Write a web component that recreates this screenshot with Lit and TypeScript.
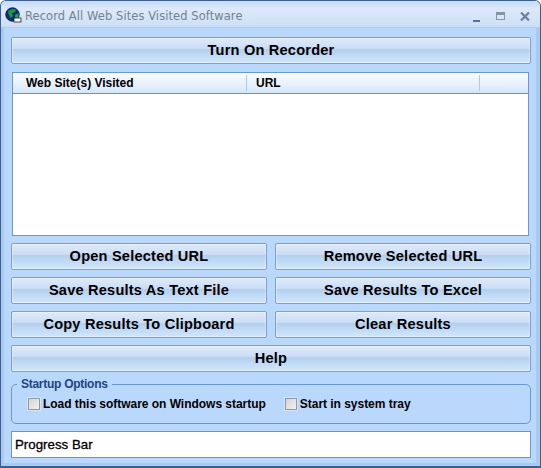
import { LitElement, html, css } from "lit";
import { customElement } from "lit/decorators.js";

@customElement("app-root")
export class AppRoot extends LitElement {
  static styles = css`
    :host {
      display: block;
      width: 541px;
      height: 468px;
      overflow: hidden;
      font-family: "Liberation Sans", Arial, sans-serif;
      color: #000;
    }
    .window {
      box-sizing: border-box;
      width: 541px;
      height: 468px;
      display: flex;
      flex-direction: column;
      background: #bad7fc;
      border: 1px solid #3d5f8d;
      border-bottom-width: 2px;
      border-radius: 6px 6px 0 0;
      overflow: hidden;
    }
    .titlebar {
      flex: 0 0 27px;
      box-sizing: border-box;
      display: flex;
      align-items: center;
      background: linear-gradient(#c4daf6, #dce9fa 30%, #d3e3f8 75%, #cbdef6);
      border-bottom: 1px solid #a9cdf6;
      padding: 4px 0 0 4px;
    }
    .logo {
      align-self: flex-start;
      margin-top: 2px;
    }
    .title {
      margin-left: 3px;
      font-family: "DejaVu Sans", sans-serif;
      font-size: 11.45px;
      letter-spacing: 0.1px;
      color: #75828f;
      flex: 1;
    }
    .winbtns {
      display: flex;
      align-items: center;
      gap: 16px;
      padding-right: 10px;
    }
    .winbtns svg { display: block; }
    .min { margin-top: 9px; }
    .close { margin-left: -1px; }
    .client {
      flex: 1;
      display: flex;
      flex-direction: column;
      padding: 9px 9px 0 10px;
      box-shadow: inset 3px 0 0 #a9c9f1, inset -4px 0 0 #a9c9f1, inset 0 -3px 0 #a9c9f1;
      background: #bad7fc;
      gap: 7px;
    }
    button {
      all: unset;
      box-sizing: border-box;
      display: flex;
      align-items: center;
      justify-content: center;
      height: 27px;
      font-weight: 700;
      font-size: 14.6px;
      letter-spacing: 0.2px;
      color: #000;
      border: 1px solid #7d9fd0;
      border-radius: 2px;
      padding-bottom: 2px;
      background: linear-gradient(#dfeafa 0%, #c9dcf5 44%, #b4cfee 46%, #bcd7f4 62%, #d1e6fb 100%);
      box-shadow: inset 0 0 0 1px rgba(255, 255, 255, 0.35);
      width: 100%;
    }
    .list {
      box-sizing: border-box;
      margin: 1px 2px 0 1px;
      height: 164px;
      background: #fff;
      border: 1px solid #6a98d4;
    }
    .head {
      display: flex;
      height: 21px;
      box-sizing: border-box;
      border-bottom: 1px solid #5f93d4;
      background: linear-gradient(#f9fbff, #e6f0fd 60%, #d3e5fb);
      font-size: 12px;
      font-weight: 700;
      align-items: center;
    }
    .col {
      box-sizing: border-box;
      height: 16px;
      line-height: 17px;
      padding-left: 9px;
      border-right: 1px solid #a8c9f2;
    }
    .c1 { width: 234px; padding-left: 13px; }
    .c2 { width: 233px; }
    .grid {
      display: grid;
      grid-template-columns: 256px 256px;
      column-gap: 8px;
      row-gap: 7px;
    }
    .group {
      box-sizing: border-box;
      position: relative;
      margin-top: 5px;
      height: 40px;
      border: 1px solid #6a97d2;
      border-radius: 5px;
      display: flex;
      align-items: center;
      gap: 19px;
      padding: 0 0 0 16px;
      font-size: 12px;
      font-weight: 700;
      letter-spacing: -0.03px;
    }
    .legend {
      position: absolute;
      left: 5px;
      top: -8px;
      padding: 0 4px;
      background: #bad7fc;
      color: #1c4587;
      font-weight: 700;
      font-size: 12px;
      letter-spacing: -0.27px;
      line-height: 14px;
    }
    .check {
      display: flex;
      align-items: center;
      gap: 3px;
      padding-bottom: 1px;
    }
    .box {
      box-sizing: border-box;
      width: 12px;
      height: 12px;
      border: 1px solid #8e9aa8;
      outline: 1px solid #d5e3f5;
      background: linear-gradient(135deg, #d4d4d4, #f2f2f2);
    }
    .progress {
      box-sizing: border-box;
      height: 27px;
      background: #fff;
      border: 1px solid #6a97d2;
      display: flex;
      align-items: center;
      padding-left: 3px;
      font-size: 13.3px;
      -webkit-text-stroke: 0.3px #000;
    }
  `;

  render() {
    return html`
      <div class="window">
        <div class="titlebar">
          <svg class="logo" width="17" height="17" viewBox="0 0 17 17">
            <circle cx="7.5" cy="7.5" r="6.8" fill="#0b2f7c" stroke="#0a1a3c" stroke-width="0.8" />
            <path d="M3 4 L7 2 L11 2.5 L10 5 L7 6 L8 9 L5.5 11 L3.5 7 Z" fill="#1f9a33" />
            <path d="M10 8 L13.5 6.5 L13.5 10 L10.5 12.5 Z" fill="#27a83c" />
            <rect x="9" y="11" width="7" height="4" fill="#f4f4f4" stroke="#222" stroke-width="0.8" />
          </svg>
          <span class="title">Record All Web Sites Visited Software</span>
          <div class="winbtns">
            <svg class="min" width="7" height="2" viewBox="0 0 7 2"><rect width="7" height="2" fill="#5a6f92" /></svg>
            <svg width="9" height="8" viewBox="0 0 9 8">
              <rect x="0.5" y="0.5" width="8" height="7" fill="#dbe6f5" stroke="#8394ad" />
              <rect x="1" y="1" width="7" height="2" fill="#8394ad" />
            </svg>
            <svg class="close" width="10" height="9" viewBox="0 0 10 9">
              <path d="M1 0.5 L9 8.5 M9 0.5 L1 8.5" stroke="#6c7f9e" stroke-width="2.2" fill="none" />
            </svg>
          </div>
        </div>
        <div class="client">
          <button>Turn On Recorder</button>
          <div class="list">
            <div class="head">
              <div class="col c1">Web Site(s) Visited</div>
              <div class="col c2">URL</div>
            </div>
          </div>
          <div class="grid">
            <button>Open Selected URL</button>
            <button>Remove Selected URL</button>
            <button>Save Results As Text File</button>
            <button>Save Results To Excel</button>
            <button>Copy Results To Clipboard</button>
            <button>Clear Results</button>
          </div>
          <button>Help</button>
          <div class="group">
            <span class="legend">Startup Options</span>
            <label class="check"><span class="box"></span>Load this software on Windows startup</label>
            <label class="check"><span class="box"></span>Start in system tray</label>
          </div>
          <div class="progress">Progress Bar</div>
        </div>
      </div>
    `;
  }
}
